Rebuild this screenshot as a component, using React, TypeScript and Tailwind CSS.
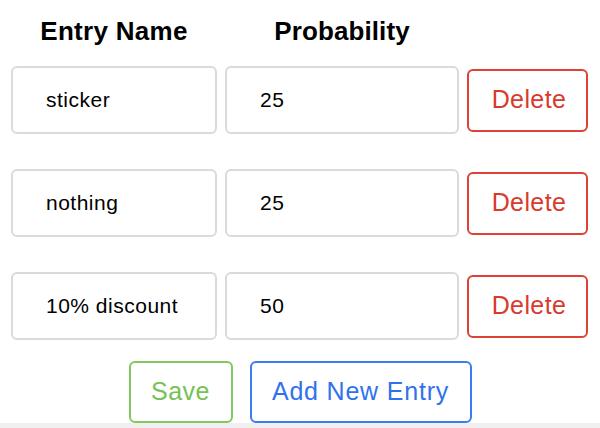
import React from "react";

const rows = [
  { name: "sticker", prob: "25" },
  { name: "nothing", prob: "25" },
  { name: "10% discount", prob: "50" },
];

export default function App() {
  return (
    <div
      className="w-[600px] h-[428px] bg-white flex flex-col overflow-hidden"
      style={{ fontFamily: '"Liberation Sans", Arial, Helvetica, sans-serif' }}
    >
      <div className="flex gap-[8px] pl-[11px] pr-[12px] h-[62px] items-center">
        <div className="w-[206px] text-center text-[26px] tracking-[0.3px] font-bold text-black pt-[1px]">
          Entry Name
        </div>
        <div className="w-[234px] text-center text-[26px] tracking-[0.1px] font-bold text-black pt-[1px]">
          Probability
        </div>
        <div className="w-[121px]" />
      </div>
      <div className="flex flex-col gap-[35px] mt-[4px]">
        {rows.map((r, i) => (
          <div key={i} className="flex gap-[8px] pl-[11px] pr-[12px] h-[68px] items-center">
            <input
              defaultValue={r.name}
              className="w-[206px] h-[68px] border-2 border-[#dadada] rounded-[6px] pl-[33px] text-[21px] tracking-[0.5px] text-black outline-none bg-white"
            />
            <input
              defaultValue={r.prob}
              className="w-[234px] h-[68px] border-2 border-[#dadada] rounded-[6px] pl-[33px] text-[21px] tracking-[0.5px] text-black outline-none bg-white"
            />
            <button className="w-[121px] h-[63px] border-2 border-[#dc4236] rounded-[6px] text-[25px] tracking-[0.4px] text-[#d83a2c] bg-white flex items-center justify-center pl-[3px]">
              Delete
            </button>
          </div>
        ))}
      </div>
      <div className="flex justify-center gap-[17px] mt-[21px]">
        <button className="w-[104px] h-[62px] border-2 border-[#80c860] rounded-[6px] text-[25px] tracking-[0.5px] text-[#77c155] bg-white flex items-center justify-center">
          Save
        </button>
        <button className="w-[222px] h-[62px] border-2 border-[#3b7cf2] rounded-[6px] text-[25px] tracking-[0.8px] text-[#2f72ee] bg-white flex items-center justify-center">
          Add New Entry
        </button>
      </div>
      <div className="flex-1 bg-[#f0f0f0]" />
    </div>
  );
}
